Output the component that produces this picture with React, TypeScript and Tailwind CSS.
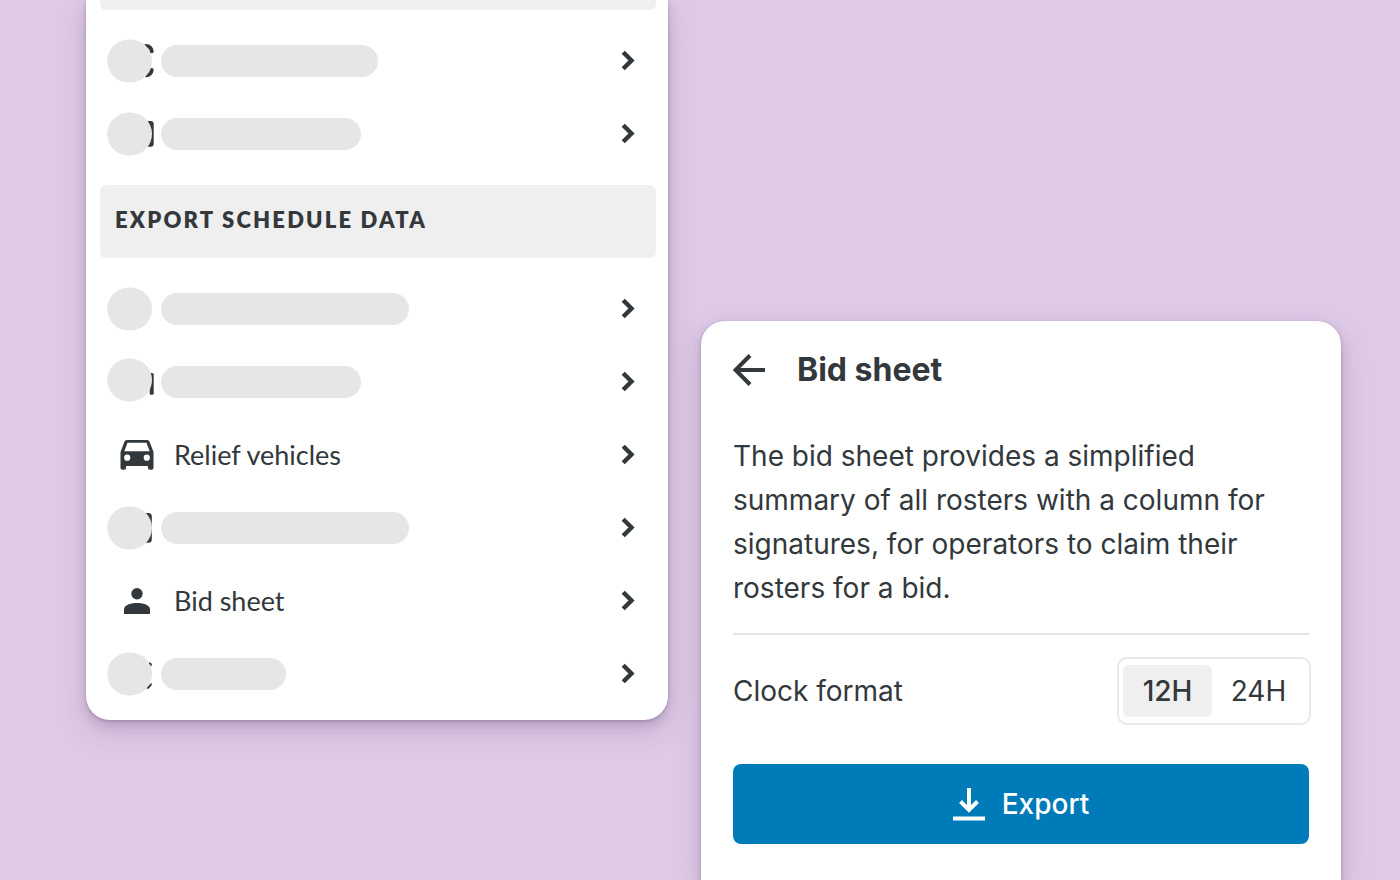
import React, { ReactNode } from 'react';

interface RowProps {
  label: string;
  children: ReactNode;
}

interface PlaceholderProps {
  circleY?: number;
  children?: ReactNode;
}

function Chevron() {
  return (
    <svg width="14" height="21" viewBox="0 0 14 21" fill="none" className="ml-auto shrink-0" aria-hidden="true">
      <path d="M2.200 2.200L10.500 10.500 2.200 18.800" stroke="currentColor" strokeWidth="4.400" />
    </svg>
  );
}

function Row({ label, children }: RowProps) {
  return (
    <li>
      <button
        type="button"
        aria-label={label}
        className="flex h-[73px] w-full cursor-pointer items-center gap-[7px] pr-[21px] pl-[7px] text-left"
      >
        {children}
        <Chevron />
      </button>
    </li>
  );
}

// Round placeholder with the edge of the icon behind it
function Placeholder({ circleY = 24, children }: PlaceholderProps) {
  return (
    <svg width="47" height="48" viewBox="0 0 47 48" fill="none" className="shrink-0" aria-hidden="true">
      {children}
      <rect x="0.3" y={circleY - 21.4} width="44.7" height="42.8" rx="21.4" fill="#e5e6e8" />
    </svg>
  );
}

function Bar({ className }: { className: string }) {
  return <span className={`h-8 rounded-full bg-[#e5e6e8] ${className}`} />;
}

function SectionHeader({ children }: { children: ReactNode }) {
  return (
    <h2 className="flex h-[73px] items-center rounded-md bg-[#efefef] px-[15px] pb-1 text-[22px] font-extrabold tracking-widest">
      {children}
    </h2>
  );
}

function CarIcon() {
  return (
    <svg width="34" height="30" viewBox="0 0 34 30" fill="currentColor" aria-hidden="true">
      <path
        fillRule="evenodd"
        d="M7 0h20c1.300 0 2.300.8 2.700 2L33.500 12v15.700c0 1.200-.8 2-2 2h-1.600c-1.200 0-2-.8-2-2V26H6.100v1.700c0 1.200-.8 2-2 2H2.500c-1.200 0-2-.8-2-2V12L4.300 2C4.700.8 5.700 0 7 0zM7.500 2.800L4.300 11.300h25.400L26.500 2.800zM7.200 14.600a3.100 3.100 0 1 0 0 6.200 3.100 3.100 0 0 0 0-6.200zM26.800 14.600a3.100 3.100 0 1 0 0 6.200 3.100 3.100 0 0 0 0-6.200z"
      />
    </svg>
  );
}

function PersonIcon() {
  return (
    <svg width="26" height="26" viewBox="0 0 26 26" fill="currentColor" aria-hidden="true">
      <circle cx="13" cy="5.700" r="5.700" />
      <path d="M0 26v-4.500C0 17.500 5.500 15 13 15s13 2.500 13 6.500V26z" />
    </svg>
  );
}

function ItemLabel({ icon, children }: { icon: ReactNode; children: ReactNode }) {
  return (
    <>
      <span className="flex w-[60px] shrink-0 justify-center">{icon}</span>
      <span className="text-[27px] leading-8">{children}</span>
    </>
  );
}

function ExportMenu() {
  return (
    <nav className="self-start rounded-b-[24px] bg-white pr-3 pb-[10px] pl-[14px] font-['Lato',sans-serif] shadow-[0_1px_3px_rgba(60,30,70,0.25),0_6px_12px_rgba(60,30,70,0.16),0_12px_32px_rgba(60,30,70,0.12)]">
      <div className="h-[10px] rounded-b-md bg-[#efefef]" />
      <ul className="pt-[14px] pb-[15px]">
        <Row label="Menu item 1">
          <Placeholder>
            <path
              d="M39 9a5.700 5.700 0 0 1 5.700 5.300M39 38.200a5.700 5.700 0 0 0 5.700-5.300"
              stroke="currentColor"
              strokeWidth="4"
              strokeLinecap="round"
            />
          </Placeholder>
          <Bar className="w-[217px]" />
        </Row>
        <Row label="Menu item 2">
          <Placeholder>
            <rect x="26" y="11" width="20.700" height="25.700" rx="3" fill="currentColor" />
          </Placeholder>
          <Bar className="w-[200px]" />
        </Row>
      </ul>
      <SectionHeader>EXPORT SCHEDULE DATA</SectionHeader>
      <ul className="pt-[14px]">
        <Row label="Export item 1">
          <Placeholder />
          <Bar className="w-[248px]" />
        </Row>
        <Row label="Export item 2">
          <Placeholder circleY={22}>
            <rect x="42.700" y="15" width="4" height="21.700" rx="1.500" fill="currentColor" />
          </Placeholder>
          <Bar className="w-[200px]" />
        </Row>
        <Row label="Relief vehicles">
          <ItemLabel icon={<CarIcon />}>Relief vehicles</ItemLabel>
        </Row>
        <Row label="Export item 4">
          <Placeholder>
            <rect x="26" y="9" width="18.800" height="29.700" rx="3.500" fill="currentColor" />
          </Placeholder>
          <Bar className="w-[248px]" />
        </Row>
        <Row label="Bid sheet">
          <ItemLabel icon={<PersonIcon />}>Bid sheet</ItemLabel>
        </Row>
        <Row label="Export item 6">
          <Placeholder>
            <path d="M42 12v2.500l2.700 2v-3zM39.500 37.500v1.200h2l3.200-3.500v-2.500z" fill="currentColor" />
          </Placeholder>
          <Bar className="w-[125px]" />
        </Row>
      </ul>
    </nav>
  );
}

function BidSheetPanel() {
  return (
    <main className="mt-[321px] rounded-t-[24px] bg-white px-8 pt-6 font-['Inter',sans-serif] text-[28px] leading-[44px] shadow-[0_1px_3px_rgba(60,30,70,0.25),0_6px_12px_rgba(60,30,70,0.16),0_12px_32px_rgba(60,30,70,0.12)]">
      <header className="flex h-[50px] items-center gap-8">
        <button type="button" aria-label="Back" className="cursor-pointer">
          <svg width="32" height="32" viewBox="0 0 32 32" fill="none" aria-hidden="true">
            <path d="M17 1.500L2.500 16 17 30.500M2.500 16H32" stroke="currentColor" strokeWidth="4" />
          </svg>
        </button>
        <h1 className="text-[32px] font-bold">Bid sheet</h1>
      </header>

      <p className="mt-[39px] border-b-2 border-[#e5e6e8] pb-[23px]">
        The bid sheet provides a simplified summary of all rosters with a column for signatures, for operators to
        claim their rosters for a bid.
      </p>

      <div className="mt-[22px] flex items-center justify-between">
        <span id="clock-format">Clock format</span>
        <div
          role="group"
          aria-labelledby="clock-format"
          className="-mr-[2px] flex h-[68px] items-center rounded-[10px] border-2 border-[#e8e8e8] px-1"
        >
          <button type="button" aria-pressed="true" className="h-[52px] w-[89px] cursor-pointer rounded-md bg-[#efefef] font-medium">
            12H
          </button>
          <button type="button" aria-pressed="false" className="h-[52px] w-[93px] cursor-pointer rounded-md">
            24H
          </button>
        </div>
      </div>

      <button
        type="button"
        className="mt-[39px] flex h-20 w-full cursor-pointer items-center justify-center gap-[17px] rounded-lg bg-[#007bba] font-medium text-white"
      >
        <svg width="32" height="33" viewBox="0 0 32 33" fill="none" aria-hidden="true">
          <path d="M16 0v22M7.500 13.500L16 22l8.500-8.500M0 30.500h32" stroke="currentColor" strokeWidth="4" />
        </svg>
        Export
      </button>
    </main>
  );
}

export default function App() {
  return (
    <div className="grid h-screen grid-cols-[582fr_640fr] gap-[33px] overflow-hidden bg-[#dec9e7] pr-[59px] pl-[86px] text-[#32383c]">
      <ExportMenu />
      <BidSheetPanel />
    </div>
  );
}
